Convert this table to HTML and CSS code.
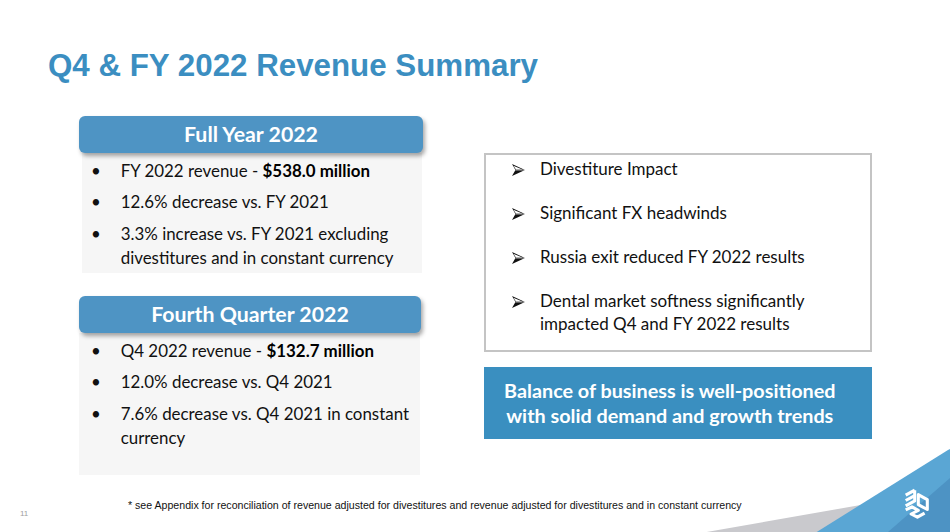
FILE: index.html
```html
<!DOCTYPE html>
<html>
<head>
<meta charset="utf-8">
<link rel="stylesheet" href="styles.css">
</head>
<body>
<div class="slide">
  <h1 class="title">Q4 &amp; FY 2022 Revenue Summary</h1>
  <div class="content">
    <div class="left">
      <div class="card">
        <div class="card-head">Full Year 2022</div>
        <ul class="card-body body-1">
          <li><span class="dot">•</span><span>FY 2022 revenue - <b>$538.0 million</b></span></li>
          <li><span class="dot">•</span><span>12.6% decrease vs. FY 2021</span></li>
          <li><span class="dot">•</span><span>3.3% increase vs. FY 2021 excluding divestitures and in constant currency</span></li>
        </ul>
      </div>
      <div class="card card-2">
        <div class="card-head">Fourth Quarter 2022</div>
        <ul class="card-body body-2">
          <li><span class="dot">•</span><span>Q4 2022 revenue - <b>$132.7 million</b></span></li>
          <li><span class="dot">•</span><span>12.0% decrease vs. Q4 2021</span></li>
          <li><span class="dot">•</span><span>7.6% decrease vs. Q4 2021 in constant currency</span></li>
        </ul>
      </div>
    </div>
    <div class="right">
      <ul class="impacts">
        <li><svg class="arrow" viewBox="0 0 12 11" width="13" height="12"><polygon points="0,0 12,5.5 0,11 3.2,5.5" fill="#111"/><polyline points="3.2,5.5 12,5.5" stroke="#fff" stroke-width="0.6"/><polygon points="1.2,1.6 9.6,5.1 3.7,5.1" fill="#fff"/></svg><span>Divestiture Impact</span></li>
        <li><svg class="arrow" viewBox="0 0 12 11" width="13" height="12"><polygon points="0,0 12,5.5 0,11 3.2,5.5" fill="#111"/><polyline points="3.2,5.5 12,5.5" stroke="#fff" stroke-width="0.6"/><polygon points="1.2,1.6 9.6,5.1 3.7,5.1" fill="#fff"/></svg><span>Significant FX headwinds</span></li>
        <li><svg class="arrow" viewBox="0 0 12 11" width="13" height="12"><polygon points="0,0 12,5.5 0,11 3.2,5.5" fill="#111"/><polyline points="3.2,5.5 12,5.5" stroke="#fff" stroke-width="0.6"/><polygon points="1.2,1.6 9.6,5.1 3.7,5.1" fill="#fff"/></svg><span>Russia exit reduced FY 2022 results</span></li>
        <li><svg class="arrow" viewBox="0 0 12 11" width="13" height="12"><polygon points="0,0 12,5.5 0,11 3.2,5.5" fill="#111"/><polyline points="3.2,5.5 12,5.5" stroke="#fff" stroke-width="0.6"/><polygon points="1.2,1.6 9.6,5.1 3.7,5.1" fill="#fff"/></svg><span>Dental market softness significantly impacted Q4 and FY 2022 results</span></li>
      </ul>
      <div class="callout">Balance of business is well-positioned<br>with solid demand and growth trends</div>
    </div>
  </div>
  <div class="footer">
    <span class="pagenum">11</span>
    <span class="footnote">* see Appendix for reconciliation of revenue adjusted for divestitures and revenue adjusted for divestitures and in constant currency</span>
  </div>
  <svg class="corner" viewBox="0 0 250 90" width="250" height="90">
    <polygon points="6.7,90 172,61 172,90" fill="#c9c9cd"/>
    <polygon points="116.7,90 248,8 250,7 250,90" fill="#5aa6d4"/>
    <polygon points="188,90 250,36 250,90" fill="#4d93c4"/>
    <g transform="translate(203,45) scale(0.9)" fill="none" stroke="#fff" stroke-width="3.4" stroke-linejoin="round">
      <path d="M3 9 L13 3.5 M3 15 L13 9.5 M13 3.5 L13 15.5 L3 21"/>
      <path d="M17 8.5 L27 14 L27 25 L17 19.5 Z"/>
      <path d="M3 25.5 L10 22 L17 26 L9 30 L16 33.5 L24 29"/>
    </g>
  </svg>
</div>
</body>
</html>
```
FILE: styles.css
```css
* { box-sizing: border-box; }
html, body { margin: 0; padding: 0; background: #fff; }
.slide {
  position: relative;
  width: 950px;
  height: 532px;
  overflow: hidden;
  background: #fff;
  font-family: Lato, "Open Sans", sans-serif;
  color: #111;
}
.title {
  margin: 0;
  padding: 48px 0 0 48px;
  font-family: "Liberation Sans", Arial, sans-serif;
  font-weight: bold;
  font-size: 31.3px;
  line-height: 36px;
  color: #3b8ec1;
}
.content {
  display: flex;
  margin-top: 32px;
  padding-left: 79px;
}
.left { width: 344px; }
.card-head {
  height: 36.7px;
  line-height: 36.7px;
  background: #4e94c4;
  border-radius: 6px;
  box-shadow: 2px 3px 4px rgba(0,0,0,0.35);
  color: #fff;
  font-weight: bold;
  font-size: 21.3px;
  text-align: center;
  position: relative;
  z-index: 1;
}
.card-2 { margin-top: 23px; }
.card-2 .card-head { width: 342px; }
.card-body {
  list-style: none;
  margin: 0 1px 0 3px;
  padding: 6px 0 0 0;
  background: #f6f6f6;
  font-size: 16.9px;
  line-height: 24px;
  display: flex;
  flex-direction: column;
  gap: 7.5px;
}
.body-1 { height: 120.3px; }
.body-2 { height: 142.3px; margin-left: 0; margin-right: 3px; padding-top: 6px; }
.card-body li { display: flex; }
.dot { flex: none; width: 38.7px; padding-left: 9px; }
.body-2 .dot { width: 41.7px; padding-left: 12px; }
.card-body b { font-weight: bold; color: #000; }
.right {
  margin-left: 60.6px;
  width: 388.4px;
  padding-top: 36.7px;
}
.impacts {
  list-style: none;
  margin: 0;
  height: 199px;
  border: 2px solid #c4c4c4;
  padding: 3.8px 20px 0 0;
  font-size: 17px;
  line-height: 22.5px;
  display: flex;
  flex-direction: column;
  gap: 21.5px;
}
.impacts li { display: flex; align-items: flex-start; }
.arrow { flex: none; margin: 5.5px 15px 0 26.4px; }
.callout {
  margin-top: 15px;
  height: 72.3px;
  padding-right: 16px;
  background: #3a8fc0;
  color: #fff;
  font-weight: bold;
  font-size: 19.8px;
  line-height: 24.5px;
  display: flex;
  align-items: center;
  justify-content: center;
  text-align: center;
}
.footer {
  display: flex;
  align-items: flex-start;
  margin-top: 23.7px;
  padding-left: 20px;
  font-family: "Liberation Sans", Arial, sans-serif;
}
.pagenum {
  width: 108px;
  padding-top: 9px;
  font-size: 8px;
  line-height: 12px;
  color: #a0a0a0;
}
.footnote {
  font-size: 10.6px;
  line-height: 12px;
  color: #111;
}
.corner {
  position: absolute;
  right: 0;
  bottom: 0;
}
```
